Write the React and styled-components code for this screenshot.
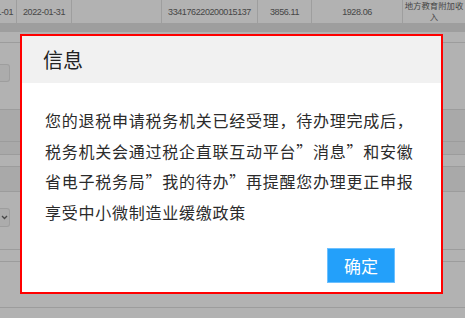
import React from "react";
import styled, { createGlobalStyle } from "styled-components";

const GlobalStyle = createGlobalStyle`
  html, body {
    margin: 0;
    padding: 0;
    background: #ffffff;
  }
  body {
    font-family: "Liberation Sans", Arial, "Noto Sans CJK SC", sans-serif;
  }
`;

const cells = [
  { w: 17, text: "2022-01-01", clip: true },
  { w: 55, text: "2022-01-31" },
  { w: 90, text: "" },
  { w: 96, text: "334176220200015137" },
  { w: 54, text: "3856.11" },
  { w: 91, text: "1928.06" },
  { w: 62, text: "地方教育附加收入", small: true },
];

const formRows = [
  { h: 11 },
  { h: 67, field: "input" },
  { h: 32, shade: true },
  { h: 13, shade: true },
  { h: 12 },
  { h: 25, shade: true },
  { h: 58, field: "select" },
  { h: 12 },
  { h: 46 },
  { h: 10, last: true },
];

const lines = [
  "您的退税申请税务机关已经受理，待办理完成后，",
  "税务机关会通过税企直联互动平台”消息”和安徽",
  "省电子税务局”我的待办”再提醒您办理更正申报",
  "享受中小微制造业缓缴政策",
];

const App = () => {
  return (
    <>
      <GlobalStyle />
      <Page>
        <TableRow>
          {cells.map((c, i) => (
            <Cell key={i} $w={c.w} $small={c.small} $clip={c.clip}>
              <CellText $small={c.small}>{c.text}</CellText>
            </Cell>
          ))}
        </TableRow>
        <ScrollBand />
        <Form>
          {formRows.map((r, i) => (
            <FormRow key={i} $h={r.h} $shade={r.shade} $last={r.last}>
              {r.field === "input" && <InputStub />}
              {r.field === "select" && (
                <SelectStub>
                  <svg width="7" height="5" viewBox="0 0 7 5">
                    <path d="M1 1l2.5 2.5L6 1" fill="none" stroke="#666" strokeWidth="1.3" />
                  </svg>
                </SelectStub>
              )}
            </FormRow>
          ))}
        </Form>
        <Overlay />
        <Dialog>
          <Header>
            <Title>信息</Title>
          </Header>
          <Body>
            {lines.map((l, i) => (
              <Line key={i}>{l}</Line>
            ))}
          </Body>
          <Footer>
            <ConfirmButton>确定</ConfirmButton>
          </Footer>
        </Dialog>
      </Page>
    </>
  );
};

export default App;

const Page = styled.div`
  position: relative;
  width: 465px;
  height: 318px;
  overflow: hidden;
  background: #ffffff;
`;

const TableRow = styled.div`
  display: flex;
  height: 24px;
  border-bottom: 1px solid #e2e2e2;
  box-sizing: border-box;
`;

const Cell = styled.div`
  flex: 0 0 ${(p) => p.$w}px;
  box-sizing: border-box;
  border-right: 1px solid #e2e2e2;
  display: flex;
  align-items: ${(p) => (p.$small ? "flex-start" : "center")};
  justify-content: ${(p) => (p.$clip ? "flex-end" : "center")};
  overflow: hidden;
  padding: ${(p) => (p.$clip ? "0 3px 0 0" : "0")};

  &:last-child {
    flex: 1 0 auto;
    border-right: none;
  }
`;

const CellText = styled.span`
  flex-shrink: 0;
  color: #666666;
  text-align: center;
  font-family: "Liberation Sans", "Noto Sans CJK SC", sans-serif;
  font-size: ${(p) => (p.$small ? "8.4px" : "9px")};
  letter-spacing: ${(p) => (p.$small ? "0" : "-0.4px")};
  line-height: ${(p) => (p.$small ? "11px" : "24px")};
  white-space: ${(p) => (p.$small ? "normal" : "nowrap")};
  width: ${(p) => (p.$small ? "60px" : "auto")};
  padding-top: ${(p) => (p.$small ? "1px" : "0")};
`;

const ScrollBand = styled.div`
  height: 8px;
  background: #e2e2e2;
`;

const Form = styled.div`
  display: flex;
  flex-direction: column;
`;

const FormRow = styled.div`
  position: relative;
  height: ${(p) => p.$h}px;
  box-sizing: border-box;
  border-bottom: ${(p) => (p.$last ? "none" : "1px solid #e0e0e0")};
  background: ${(p) => (p.$shade ? "#f2f2f2" : "#ffffff")};
  display: flex;
  align-items: center;
`;

const InputStub = styled.div`
  width: 10px;
  height: 18px;
  box-sizing: border-box;
  margin-top: -6px;
  border: 1px solid #e3e3e3;
  border-left: none;
  border-radius: 0 3px 3px 0;
  background: #f6f6f6;
`;

const SelectStub = styled.div`
  width: 10px;
  height: 19px;
  box-sizing: border-box;
  margin-top: -6px;
  border: 1px solid #e3e3e3;
  border-left: none;
  border-radius: 0 3px 3px 0;
  background: #f6f6f6;
  display: flex;
  align-items: center;
  justify-content: flex-end;
  padding-right: 1px;
`;

const Overlay = styled.div`
  position: absolute;
  inset: 0;
  background: rgba(0, 0, 0, 0.3);
`;

const Dialog = styled.div`
  position: absolute;
  left: 20px;
  top: 34px;
  width: 423px;
  height: 260px;
  box-sizing: border-box;
  border: 2px solid #ff0000;
  background: #ffffff;
  display: flex;
  flex-direction: column;
  font-family: "Noto Sans CJK SC", "Liberation Sans", sans-serif;
`;

const Header = styled.div`
  height: 47px;
  background: #f1f1f1;
  display: flex;
  align-items: center;
  padding-left: 21px;
`;

const Title = styled.div`
  font-size: 20px;
  color: #222222;
  line-height: 1;
`;

const Body = styled.div`
  padding: 22px 0 0 23px;
  flex: 1;
`;

const Line = styled.div`
  font-size: 16px;
  letter-spacing: 0.75px;
  line-height: 30.5px;
  color: #2b2b2b;
  white-space: nowrap;
`;

const Footer = styled.div`
  display: flex;
  justify-content: flex-end;
  padding: 0 46px 9px 0;
`;

const ConfirmButton = styled.button`
  width: 68px;
  height: 35px;
  box-sizing: border-box;
  border: 1px solid #6cc0ff;
  background: #23a0fa;
  color: #ffffff;
  font-family: "Noto Sans CJK SC", sans-serif;
  font-size: 17px;
  padding: 0;
  cursor: pointer;
`;
